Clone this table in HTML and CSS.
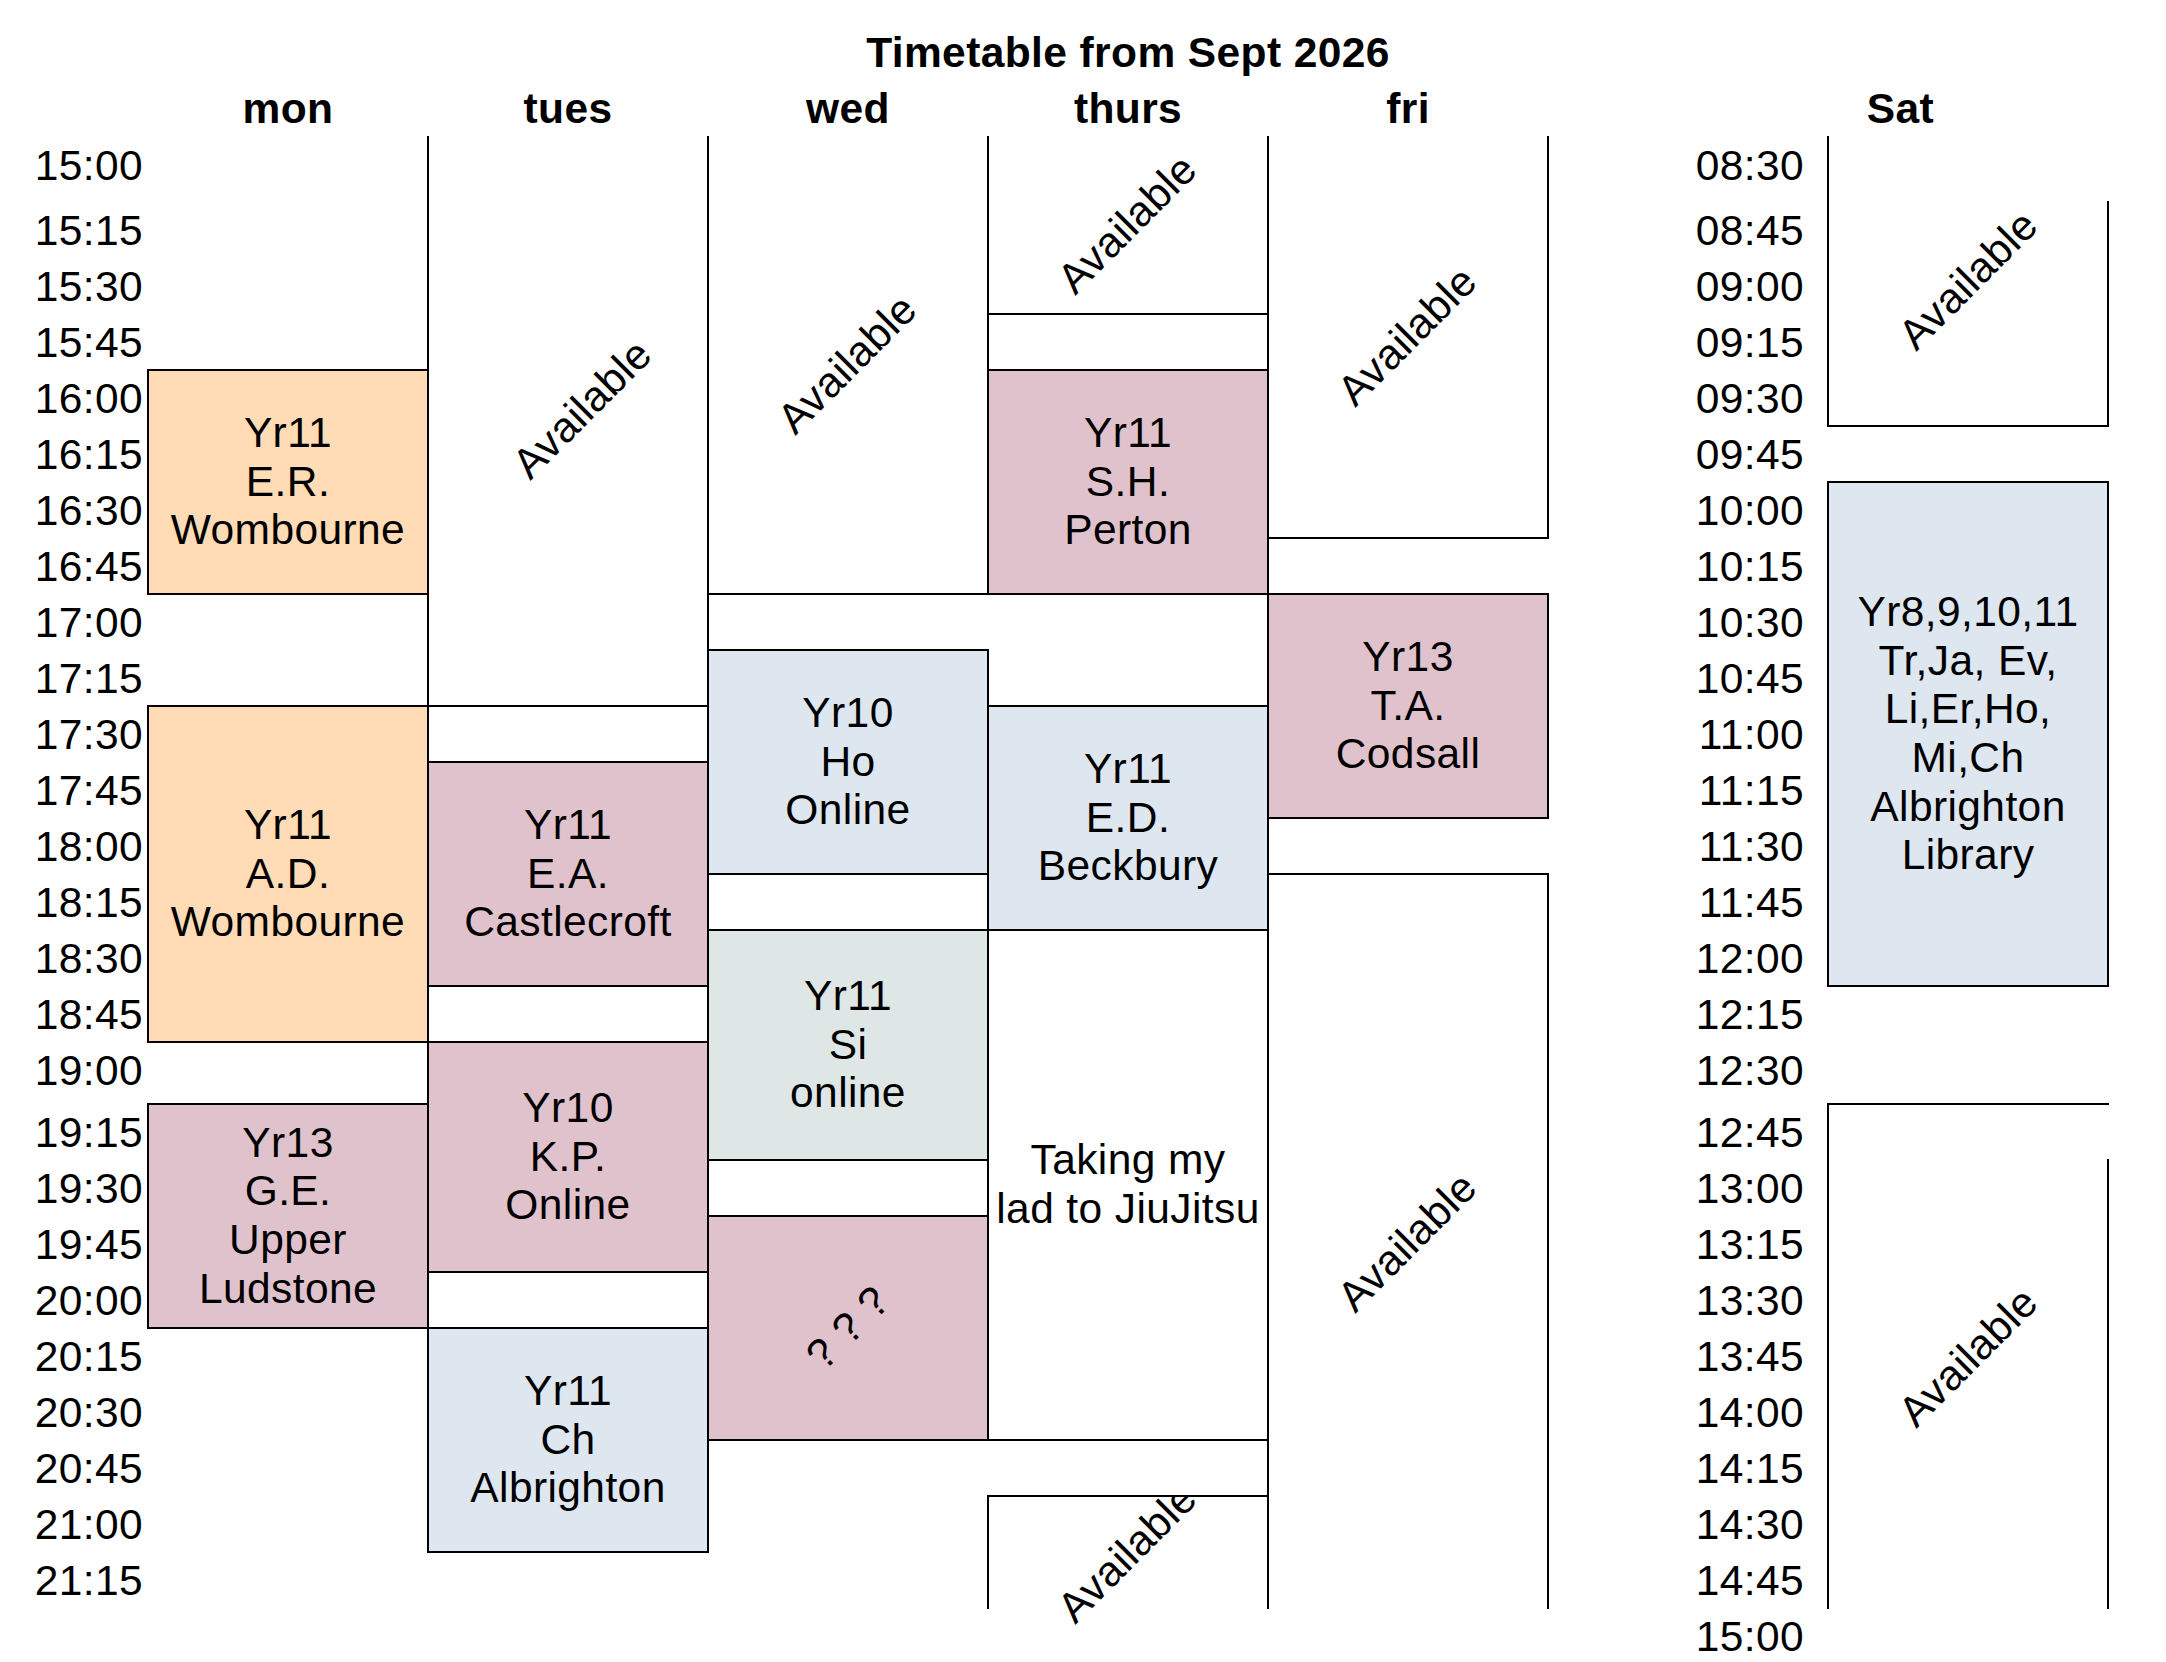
FILE: index.html
```html
<!DOCTYPE html>
<html lang="en">
<head>
<meta charset="utf-8">
<title>Timetable from Sept 2026</title>
<link rel="stylesheet" href="styles.css">
</head>
<body>
<div class="sheet">
  <div class="title">Timetable from Sept 2026</div>

  <div class="day mon">mon</div>
  <div class="day tue">tues</div>
  <div class="day wed">wed</div>
  <div class="day thu">thurs</div>
  <div class="day fri">fri</div>
  <div class="day sat sat-head">Sat</div>

  <div class="times week-times">
    <span>15:00</span><span>15:15</span><span>15:30</span><span>15:45</span>
    <span>16:00</span><span>16:15</span><span>16:30</span><span>16:45</span>
    <span>17:00</span><span>17:15</span><span>17:30</span><span>17:45</span>
    <span>18:00</span><span>18:15</span><span>18:30</span><span>18:45</span>
    <span>19:00</span><span>19:15</span><span>19:30</span><span>19:45</span>
    <span>20:00</span><span>20:15</span><span>20:30</span><span>20:45</span>
    <span>21:00</span><span>21:15</span>
  </div>

  <div class="times sat-times">
    <span>08:30</span><span>08:45</span><span>09:00</span><span>09:15</span>
    <span>09:30</span><span>09:45</span><span>10:00</span><span>10:15</span>
    <span>10:30</span><span>10:45</span><span>11:00</span><span>11:15</span>
    <span>11:30</span><span>11:45</span><span>12:00</span><span>12:15</span>
    <span>12:30</span><span>12:45</span><span>13:00</span><span>13:15</span>
    <span>13:30</span><span>13:45</span><span>14:00</span><span>14:15</span>
    <span>14:30</span><span>14:45</span><span>15:00</span>
  </div>

  <!-- mon -->
  <div class="slot mon r4 s4 box orange">Yr11<br>E.R.<br>Wombourne</div>
  <div class="slot mon r10 s6 box orange">Yr11<br>A.D.<br>Wombourne</div>
  <div class="slot mon r17 s4 box pink">Yr13<br>G.E.<br>Upper<br>Ludstone</div>

  <!-- tues -->
  <div class="slot tue r0 s10 bl br bb"><span class="diag nudge">Available</span></div>
  <div class="slot tue r10 s1 bl br"></div>
  <div class="slot tue r11 s4 box pink">Yr11<br>E.A.<br>Castlecroft</div>
  <div class="slot tue r15 s1 bl br"></div>
  <div class="slot tue r16 s4 box pink">Yr10<br>K.P.<br>Online</div>
  <div class="slot tue r20 s1 bl br"></div>
  <div class="slot tue r21 s4 box blue">Yr11<br>Ch<br>Albrighton</div>

  <!-- wed -->
  <div class="slot wed r0 s8 bl br bb"><span class="diag">Available</span></div>
  <div class="slot wed r9 s4 box blue">Yr10<br>Ho<br>Online</div>
  <div class="slot wed r13 s1 bl br"></div>
  <div class="slot wed r14 s4 box sage">Yr11<br>Si<br>online</div>
  <div class="slot wed r18 s1 bl br"></div>
  <div class="slot wed r19 s4 box pink"><span class="diag">? ? ?</span></div>

  <!-- thurs -->
  <div class="slot thu r0 s3 bl br bb"><span class="diag">Available</span></div>
  <div class="slot thu r3 s1 bl br"></div>
  <div class="slot thu r4 s4 box pink">Yr11<br>S.H.<br>Perton</div>
  <div class="slot thu r10 s4 box blue">Yr11<br>E.D.<br>Beckbury</div>
  <div class="slot thu r14 s9 box">Taking my<br>lad to JiuJitsu</div>
  <div class="slot thu r24 s2 bt bl br clip-top"><span class="diag">Available</span></div>

  <!-- fri -->
  <div class="slot fri r0 s7 bl br bb"><span class="diag">Available</span></div>
  <div class="slot fri r7 s1 bl"></div>
  <div class="slot fri r8 s4 box pink">Yr13<br>T.A.<br>Codsall</div>
  <div class="slot fri r12 s1 bl"></div>
  <div class="slot fri r13 s13 bt bl br"><span class="diag">Available</span></div>

  <!-- sat -->
  <div class="slot sat r0 s5 bl bb"><span class="diag">Available</span></div>
  <div class="slot sat r1 s4 br edge"></div>
  <div class="slot sat r6 s9 box blue">Yr8,9,10,11<br>Tr,Ja, Ev,<br>Li,Er,Ho,<br>Mi,Ch<br>Albrighton<br>Library</div>
  <div class="slot sat r17 s9 bt bl"><span class="diag">Available</span></div>
  <div class="slot sat r18 s8 br edge"></div>
</div>
</body>
</html>
```

FILE: styles.css
```css
html {
  overflow: hidden;
}

body {
  margin: 0;
  background: #ffffff;
  color: #000000;
  font-family: "Liberation Sans", Arial, sans-serif;
}

.sheet {
  display: grid;
  grid-template-columns: 148px repeat(7, 280px);
  grid-template-rows: 56px 56px 65px repeat(15, 56px) 62px repeat(10, 56px);
  padding-top: 25px;
  font-size: 42.5px;
  letter-spacing: 0.4px;
}

.title {
  grid-column: 2 / 9;
  grid-row: 1;
  text-align: center;
  font-weight: bold;
  line-height: 56px;
  white-space: nowrap;
}

.day {
  grid-row: 2;
  text-align: center;
  font-weight: bold;
  line-height: 56px;
}

.sat-head {
  padding-right: 135px;
}

/* columns */
.mon { grid-column: 2; }
.tue { grid-column: 3; }
.wed { grid-column: 4; }
.thu { grid-column: 5; }
.fri { grid-column: 6; }
.sat { grid-column: 8; }

/* time labels */
.times {
  display: grid;
  text-align: right;
  white-space: nowrap;
}

.times span {
  line-height: 58px;
  align-self: start;
}

.week-times {
  grid-column: 1;
  grid-row: 3 / span 26;
  grid-template-rows: 65px repeat(15, 56px) 62px repeat(9, 56px);
  padding-right: 5px;
}

.sat-times {
  grid-column: 7;
  grid-row: 3 / span 27;
  grid-template-rows: 65px repeat(15, 56px) 62px repeat(10, 56px);
  padding-right: 24px;
}

/* slot rows (r0 = 15:00 / 08:30 lives on grid line 3) */
.r0 { grid-row-start: 3; }
.r1 { grid-row-start: 4; }
.r3 { grid-row-start: 6; }
.r4 { grid-row-start: 7; }
.r6 { grid-row-start: 9; }
.r7 { grid-row-start: 10; }
.r8 { grid-row-start: 11; }
.r9 { grid-row-start: 12; }
.r10 { grid-row-start: 13; }
.r11 { grid-row-start: 14; }
.r12 { grid-row-start: 15; }
.r13 { grid-row-start: 16; }
.r14 { grid-row-start: 17; }
.r15 { grid-row-start: 18; }
.r16 { grid-row-start: 19; }
.r17 { grid-row-start: 20; }
.r18 { grid-row-start: 21; }
.r19 { grid-row-start: 22; }
.r20 { grid-row-start: 23; }
.r21 { grid-row-start: 24; }
.r24 { grid-row-start: 27; }

.s1 { grid-row-end: span 1; }
.s2 { grid-row-end: span 2; }
.s3 { grid-row-end: span 3; }
.s4 { grid-row-end: span 4; }
.s5 { grid-row-end: span 5; }
.s6 { grid-row-end: span 6; }
.s7 { grid-row-end: span 7; }
.s8 { grid-row-end: span 8; }
.s9 { grid-row-end: span 9; }
.s10 { grid-row-end: span 10; }
.s13 { grid-row-end: span 13; }

/* slot cells */
.slot {
  margin: -1px;
  display: flex;
  align-items: center;
  justify-content: center;
  text-align: center;
  line-height: 48.7px;
  white-space: nowrap;
  border: 0 solid #000000;
}

.box { border-width: 2px; }
.bt { border-top-width: 2px; }
.bb { border-bottom-width: 2px; }
.bl { border-left-width: 2px; }
.br { border-right-width: 2px; }

.edge {
  background: transparent;
  pointer-events: none;
}

.orange { background: #ffdbb6; }
.pink { background: #e0c2cd; }
.blue { background: #dee6ef; }
.sage { background: #dee7e5; }

.diag {
  display: inline-block;
  transform: rotate(-45deg);
}

.nudge {
  transform: translate(15px, -11px) rotate(-45deg);
}

.clip-top {
  clip-path: polygon(-300px 0, calc(100% + 300px) 0, calc(100% + 300px) calc(100% + 300px), -300px calc(100% + 300px));
}
```
